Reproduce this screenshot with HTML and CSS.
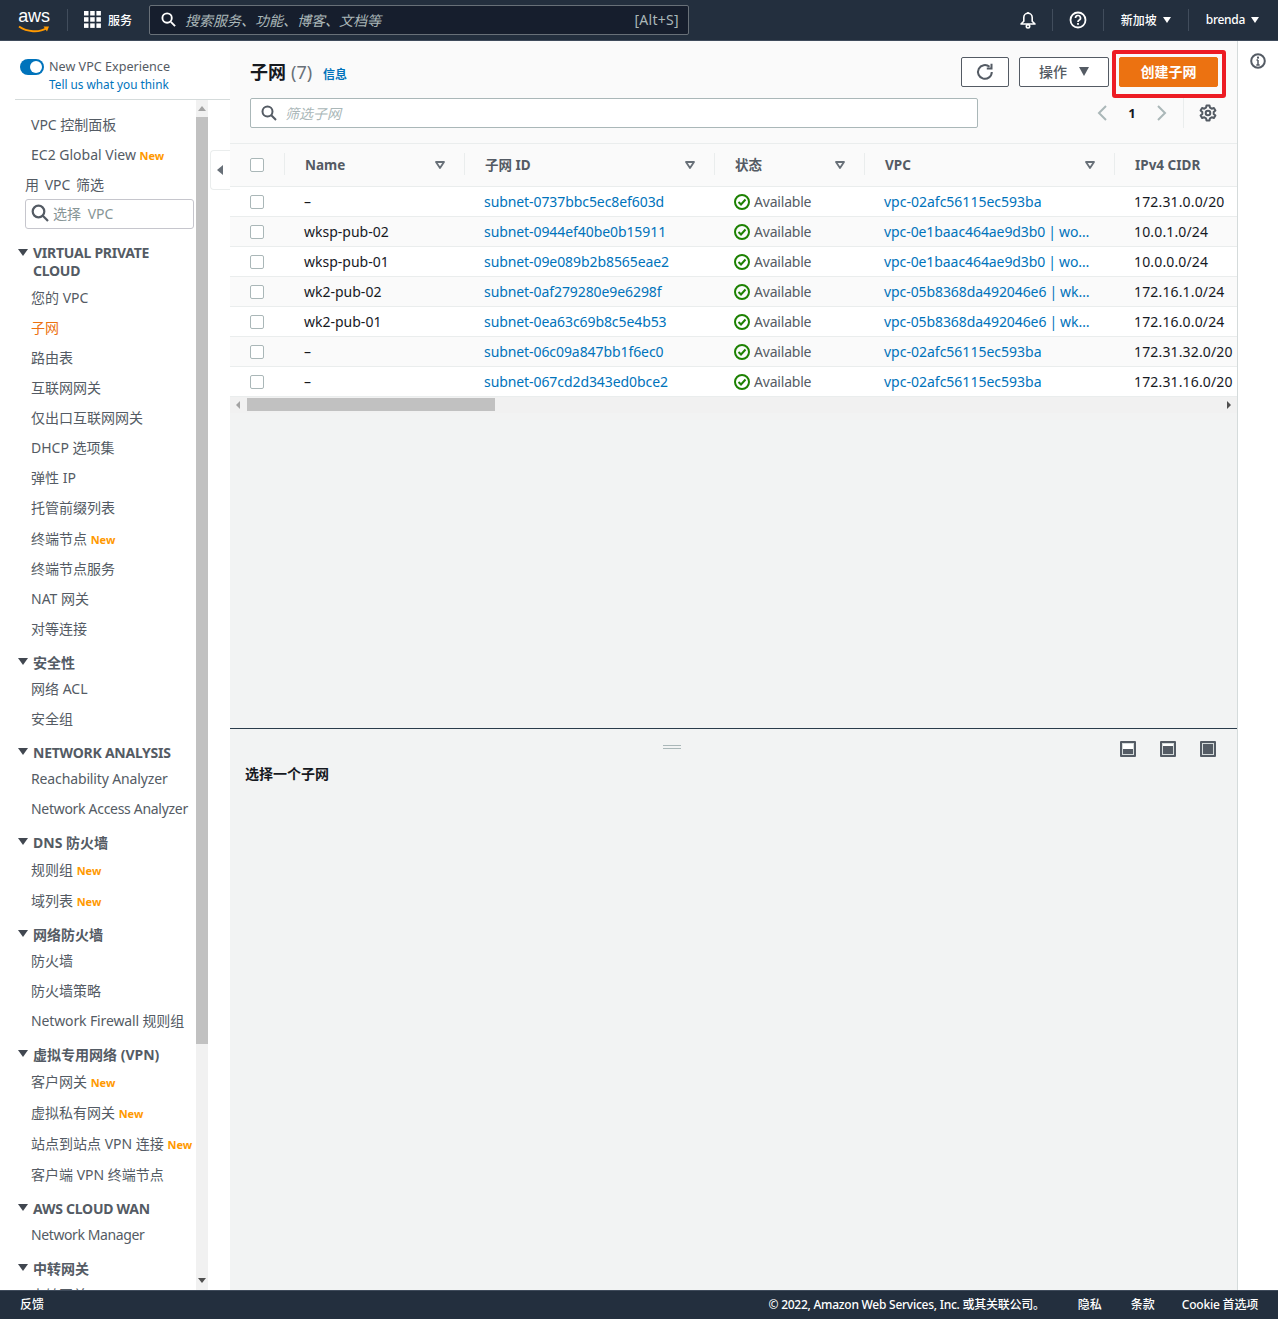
FILE: index.html
```html
<!DOCTYPE html>
<html lang="zh">
<head>
<meta charset="utf-8">
<title>子网 | VPC Console</title>
<link rel="stylesheet" href="styles.css">
</head>
<body>
<header class="topbar">
  <div class="logo">
    <span class="logo-text">aws</span>
    <svg class="logo-smile" width="32" height="8" viewBox="0 0 32 8"><path d="M1 1.500C9 7 21 8 29 3" fill="none" stroke="#f90" stroke-width="2"/><path d="M25.500 1.500L31 1.500L29 6.500Z" fill="#f90"/></svg>
  </div>
  <span class="top-sep top-sep-a"></span>
  <svg class="grid-icon" width="17" height="17" viewBox="0 0 17 17" fill="#fff"><rect width="4.500" height="4.500"/><rect x="6.200" width="4.500" height="4.500"/><rect x="12.400" width="4.500" height="4.500"/><rect y="6.200" width="4.500" height="4.500"/><rect x="6.200" y="6.200" width="4.500" height="4.500"/><rect x="12.400" y="6.200" width="4.500" height="4.500"/><rect y="12.400" width="4.500" height="4.500"/><rect x="6.200" y="12.400" width="4.500" height="4.500"/><rect x="12.400" y="12.400" width="4.500" height="4.500"/></svg>
  <span class="top-link services">服务</span>
  <div class="top-search">
    <svg width="15" height="15" viewBox="0 0 16 16" fill="none" stroke="#fff" stroke-width="2"><circle cx="6.500" cy="6.500" r="5"/><path d="M10.500 10.500L15 15"/></svg>
    <span class="top-search-text">搜索服务、功能、博客、文档等</span>
    <span class="top-search-key">[Alt+S]</span>
  </div>
  <div class="top-right">
    <svg class="bell" width="18" height="18" viewBox="0 0 18 18" fill="none" stroke="#fff" stroke-width="1.600"><path d="M2 13L4.800 10.200V6.500a4.200 4.200 0 0 1 8.400 0v3.700L16 13Z" stroke-linejoin="round"/><circle cx="9" cy="15.300" r="1.700"/><path d="M9 1V2.300"/></svg>
    <span class="top-sep"></span>
    <svg class="help" width="18" height="18" viewBox="0 0 18 18" fill="none" stroke="#fff"><circle cx="9" cy="9" r="7.500" stroke-width="1.800"/><path d="M6.500 7a2.500 2.500 0 1 1 3.500 2.300C9.300 9.700 9 10 9 11" stroke-width="1.700"/><rect x="8.100" y="12" width="1.800" height="1.800" fill="#fff" stroke="none"/></svg>
    <span class="top-sep"></span>
    <span class="top-link region">新加坡<i class="caret"></i></span>
    <span class="top-sep"></span>
    <span class="top-link user"><span class="user-name">brenda</span><i class="caret"></i></span>
  </div>
</header>

<div class="shell">
  <aside class="sidebar">
    <div class="experience">
      <span class="toggle"></span>
      <div class="experience-text">
        <div class="experience-title">New VPC Experience</div>
        <a class="experience-link">Tell us what you think</a>
      </div>
    </div>
    <div class="nav-wrap">
      <nav class="nav">
        <a class="nav-item first">VPC 控制面板</a>
        <a class="nav-item">EC2 Global View <b class="new">New</b></a>
        <div class="filter-label">用 VPC 筛选</div>
        <div class="vpc-select">
          <svg width="18" height="18" viewBox="0 0 18 18" fill="none" stroke="#545b64" stroke-width="2.200"><circle cx="7.500" cy="7.500" r="5.800"/><path d="M11.800 11.800L17 17"/></svg>
          <span>选择 VPC</span>
        </div>

        <div class="nav-head tall en-head">VIRTUAL PRIVATE CLOUD</div>
        <a class="nav-item">您的 VPC</a>
        <a class="nav-item active">子网</a>
        <a class="nav-item">路由表</a>
        <a class="nav-item">互联网网关</a>
        <a class="nav-item">仅出口互联网网关</a>
        <a class="nav-item">DHCP 选项集</a>
        <a class="nav-item">弹性 IP</a>
        <a class="nav-item">托管前缀列表</a>
        <a class="nav-item has-new">终端节点 <b class="new">New</b></a>
        <a class="nav-item">终端节点服务</a>
        <a class="nav-item">NAT 网关</a>
        <a class="nav-item">对等连接</a>

        <div class="nav-head">安全性</div>
        <a class="nav-item">网络 ACL</a>
        <a class="nav-item">安全组</a>

        <div class="nav-head en-head">NETWORK ANALYSIS</div>
        <a class="nav-item en">Reachability Analyzer</a>
        <a class="nav-item en-tight">Network Access Analyzer</a>

        <div class="nav-head">DNS 防火墙</div>
        <a class="nav-item has-new">规则组 <b class="new">New</b></a>
        <a class="nav-item has-new">域列表 <b class="new">New</b></a>

        <div class="nav-head">网络防火墙</div>
        <a class="nav-item">防火墙</a>
        <a class="nav-item">防火墙策略</a>
        <a class="nav-item en">Network Firewall 规则组</a>

        <div class="nav-head">虚拟专用网络 (VPN)</div>
        <a class="nav-item has-new">客户网关 <b class="new">New</b></a>
        <a class="nav-item has-new">虚拟私有网关 <b class="new">New</b></a>
        <a class="nav-item has-new">站点到站点 VPN 连接 <b class="new">New</b></a>
        <a class="nav-item nudge">客户端 VPN 终端节点</a>

        <div class="nav-head en-head">AWS CLOUD WAN</div>
        <a class="nav-item en-tighter">Network Manager</a>

        <div class="nav-head">中转网关</div>
        <a class="nav-item">中转网关</a>
      </nav>
      <div class="scrollbar">
        <i class="arrow-up"></i>
        <div class="thumb"></div>
        <i class="arrow-down"></i>
      </div>
    </div>
  </aside>

  <main class="content">
    <button class="collapse" aria-label="collapse"><i></i></button>
    <section class="list-head">
      <div class="title-row">
        <h1>子网 <span class="count">(7)</span> <a class="info">信息</a></h1>
        <div class="actions">
          <button class="btn icon-btn"><svg width="18" height="18" viewBox="0 0 18 18" fill="none" stroke="#545b64" stroke-width="2"><path d="M15.800 9A6.900 6.900 0 1 1 13.500 3.800"/><path d="M15.500 0.800V5.500H10.800" stroke-width="2"/></svg></button>
          <button class="btn menu-btn">操作<i class="btn-caret"></i></button>
          <button class="btn primary">创建子网</button>
        </div>
      </div>
      <div class="filter-row">
        <div class="filter">
          <svg width="16" height="16" viewBox="0 0 16 16" fill="none" stroke="#545b64" stroke-width="2"><circle cx="6.500" cy="6.500" r="5"/><path d="M10.300 10.300L15 15"/></svg>
          <span>筛选子网</span>
        </div>
        <div class="pager">
          <svg width="12" height="16" viewBox="0 0 12 16" fill="none" stroke="#aab7b8" stroke-width="2"><path d="M10 1L3 8L10 15"/></svg>
          <span class="page-num">1</span>
          <svg width="12" height="16" viewBox="0 0 12 16" fill="none" stroke="#aab7b8" stroke-width="2"><path d="M2 1L9 8L2 15"/></svg>
          <span class="pager-sep"></span>
          <svg class="gear" width="18" height="18" viewBox="0 0 18 18" fill="none" stroke="#545b64" stroke-width="2"><circle cx="9" cy="9" r="2.300"/><path d="M7.500 1.500h3l.5 2.200 1.700 1 2.200-.7 1.500 2.600-1.700 1.500v1.800l1.700 1.500-1.500 2.600-2.200-.7-1.700 1-.5 2.200h-3l-.5-2.200-1.700-1-2.200.7-1.500-2.600 1.700-1.500V8.100L1.600 6.600 3.100 4l2.200.7 1.700-1Z" stroke-linejoin="round"/></svg>
        </div>
      </div>
    </section>

    <div class="table-wrap">
      <table class="grid">
        <colgroup><col class="c0"><col class="c1"><col class="c2"><col class="c3"><col class="c4"><col class="c5"></colgroup>
        <thead>
          <tr>
            <th><span class="check"></span></th>
            <th><div class="th-in">Name<svg class="sort" width="10" height="8" viewBox="0 0 10 8"><path d="M1 1H9L5 7Z" fill="#fafafa" stroke="#687078" stroke-width="1.800" stroke-linejoin="round"/></svg></div></th>
            <th><div class="th-in">子网 ID<svg class="sort" width="10" height="8" viewBox="0 0 10 8"><path d="M1 1H9L5 7Z" fill="#fafafa" stroke="#687078" stroke-width="1.800" stroke-linejoin="round"/></svg></div></th>
            <th><div class="th-in">状态<svg class="sort" width="10" height="8" viewBox="0 0 10 8"><path d="M1 1H9L5 7Z" fill="#fafafa" stroke="#687078" stroke-width="1.800" stroke-linejoin="round"/></svg></div></th>
            <th><div class="th-in">VPC<svg class="sort" width="10" height="8" viewBox="0 0 10 8"><path d="M1 1H9L5 7Z" fill="#fafafa" stroke="#687078" stroke-width="1.800" stroke-linejoin="round"/></svg></div></th>
            <th><div class="th-in">IPv4 CIDR</div></th>
          </tr>
        </thead>
        <tbody>
          <tr><td><span class="check"></span></td><td>–</td><td class="id"><a>subnet-0737bbc5ec8ef603d</a></td><td><span class="status"><svg width="16" height="16" viewBox="0 0 16 16" fill="none" stroke="#1d8102" stroke-width="2"><circle cx="8" cy="8" r="7"/><path d="M4.500 8L7 10.500L11.500 5.500"/></svg>Available</span></td><td><a>vpc-02afc56115ec593ba</a></td><td class="cidr">172.31.0.0/20</td></tr>
          <tr><td><span class="check"></span></td><td>wksp-pub-02</td><td class="id"><a>subnet-0944ef40be0b15911</a></td><td><span class="status"><svg width="16" height="16" viewBox="0 0 16 16" fill="none" stroke="#1d8102" stroke-width="2"><circle cx="8" cy="8" r="7"/><path d="M4.500 8L7 10.500L11.500 5.500"/></svg>Available</span></td><td class="vpc-long"><a>vpc-0e1baac464ae9d3b0 | wo…</a></td><td class="cidr">10.0.1.0/24</td></tr>
          <tr><td><span class="check"></span></td><td>wksp-pub-01</td><td class="id"><a>subnet-09e089b2b8565eae2</a></td><td><span class="status"><svg width="16" height="16" viewBox="0 0 16 16" fill="none" stroke="#1d8102" stroke-width="2"><circle cx="8" cy="8" r="7"/><path d="M4.500 8L7 10.500L11.500 5.500"/></svg>Available</span></td><td class="vpc-long"><a>vpc-0e1baac464ae9d3b0 | wo…</a></td><td class="cidr">10.0.0.0/24</td></tr>
          <tr><td><span class="check"></span></td><td>wk2-pub-02</td><td class="id"><a>subnet-0af279280e9e6298f</a></td><td><span class="status"><svg width="16" height="16" viewBox="0 0 16 16" fill="none" stroke="#1d8102" stroke-width="2"><circle cx="8" cy="8" r="7"/><path d="M4.500 8L7 10.500L11.500 5.500"/></svg>Available</span></td><td class="vpc-long"><a>vpc-05b8368da492046e6 | wk…</a></td><td class="cidr">172.16.1.0/24</td></tr>
          <tr><td><span class="check"></span></td><td>wk2-pub-01</td><td class="id"><a>subnet-0ea63c69b8c5e4b53</a></td><td><span class="status"><svg width="16" height="16" viewBox="0 0 16 16" fill="none" stroke="#1d8102" stroke-width="2"><circle cx="8" cy="8" r="7"/><path d="M4.500 8L7 10.500L11.500 5.500"/></svg>Available</span></td><td class="vpc-long"><a>vpc-05b8368da492046e6 | wk…</a></td><td class="cidr">172.16.0.0/24</td></tr>
          <tr><td><span class="check"></span></td><td>–</td><td class="id"><a>subnet-06c09a847bb1f6ec0</a></td><td><span class="status"><svg width="16" height="16" viewBox="0 0 16 16" fill="none" stroke="#1d8102" stroke-width="2"><circle cx="8" cy="8" r="7"/><path d="M4.500 8L7 10.500L11.500 5.500"/></svg>Available</span></td><td><a>vpc-02afc56115ec593ba</a></td><td class="cidr">172.31.32.0/20</td></tr>
          <tr><td><span class="check"></span></td><td>–</td><td class="id"><a>subnet-067cd2d343ed0bce2</a></td><td><span class="status"><svg width="16" height="16" viewBox="0 0 16 16" fill="none" stroke="#1d8102" stroke-width="2"><circle cx="8" cy="8" r="7"/><path d="M4.500 8L7 10.500L11.500 5.500"/></svg>Available</span></td><td><a>vpc-02afc56115ec593ba</a></td><td class="cidr">172.31.16.0/20</td></tr>
        </tbody>
      </table>
    </div>
    <div class="hscroll">
      <i class="arrow-left"></i>
      <div class="hthumb"></div>
      <i class="arrow-right"></i>
    </div>
    <div class="empty"></div>

    <section class="split">
      <div class="split-top">
        <span class="grip"></span>
        <div class="split-icons">
          <span class="pane-icon low"></span>
          <span class="pane-icon mid"></span>
          <span class="pane-icon full"></span>
        </div>
      </div>
      <div class="split-title">选择一个子网</div>
    </section>
  </main>

  <aside class="rail">
    <svg width="16" height="16" viewBox="0 0 16 16" fill="none" stroke="#545b64" stroke-width="2"><circle cx="8" cy="8" r="6.800"/><path d="M8 7V12M6.300 12H9.700M6.500 7H8" stroke-width="1.500"/><rect x="7" y="3.600" width="2" height="2" fill="#545b64" stroke="none"/></svg>
  </aside>
</div>

<footer class="footer">
  <span class="feedback">反馈</span>
  <div class="foot-right">
    <span class="copy">© 2022, Amazon Web Services, Inc. 或其关联公司。</span>
    <span class="privacy">隐私</span>
    <span>条款</span>
    <span class="cookie">Cookie 首选项</span>
  </div>
</footer>
</body>
</html>
```

FILE: styles.css
```css
*, *::before, *::after { box-sizing: border-box; }
html, body { height: 100%; }
body {
  margin: 0;
  height: 1319px;
  overflow: hidden;
  display: flex;
  flex-direction: column;
  font-family: "Noto Sans", "Noto Sans CJK SC", sans-serif;
  font-size: 14px;
  color: #16191f;
  background: #f2f3f3;
}
i { display: block; font-style: normal; }
a { color: #0073bb; text-decoration: none; }

/* top bar */
.topbar {
  flex: 0 0 41px;
  display: flex;
  align-items: center;
  background: #232f3e;
  border-bottom: 1px solid #3f4b5b;
  padding: 0 19px 1px 18px;
  color: #fff;
}
.logo { width: 32px; height: 32px; display: flex; flex-direction: column; align-items: center; }
.logo-text { font-size: 18px; line-height: 21px; margin-top: 2px; font-family: "Liberation Sans", sans-serif; letter-spacing: -0.2px; }
.logo-smile { margin-top: -2px; }
.top-sep { width: 1px; height: 22px; background: #414d5c; }
.top-sep-a { margin-left: 17px; margin-right: 16px; }
.top-link { font-size: 12px; font-weight: 500; white-space: nowrap; display: flex; align-items: center; }
.services { margin-left: 7px; margin-right: 17px; }
.top-search {
  width: 540px;
  height: 30px;
  display: flex;
  align-items: center;
  gap: 9px;
  padding: 0 9px 0 11px;
  background: #161e2d;
  border: 1px solid #687078;
  border-radius: 2px;
  font-size: 14px;
}
.top-search-text { flex: 1; font-style: italic; color: #aab7b8; }
.top-search-key { color: #aab7b8; letter-spacing: 0.300px; }
.top-right { margin-left: auto; display: flex; align-items: center; }
.bell { margin-right: 15px; }
.help { margin: 0 16px 0 16px; }
.region { margin: 0 17px 0 17px; }
.user { margin-left: 17px; }
.user-name { letter-spacing: -0.3px; }
.caret { width: 0; height: 0; margin-left: 6px; border-left: 4.500px solid transparent; border-right: 4.500px solid transparent; border-top: 6px solid #fff; }

/* shell */
.shell { flex: 1; min-height: 0; display: flex; }
.sidebar { flex: 0 0 230px; background: #fff; display: flex; flex-direction: column; min-height: 0; }
.experience {
  flex: 0 0 59px;
  margin-left: 15px;
  padding: 18px 0 0 5px;
  display: flex;
  gap: 5px;
  border-bottom: 1px solid #d5dbdb;
}
.toggle { width: 24px; height: 16px; border-radius: 8px; background: #0073bb; position: relative; flex: none; }
.toggle::after { content: ""; position: absolute; right: 2px; top: 2px; width: 12px; height: 12px; border-radius: 50%; background: #fff; }
.experience-title { font-size: 12.600px; line-height: 15px; color: #545b64; white-space: nowrap; }
.experience-link { display: block; margin-top: 2px; font-size: 11.800px; line-height: 16px; color: #0073bb; }

.nav-wrap { flex: 1; min-height: 0; display: flex; overflow: hidden; }
.nav { width: 196px; flex: none; overflow: hidden; color: #545b64; padding-top: 10px; }
.nav-item { display: block; height: 30px; line-height: 30px; padding-left: 31px; color: #545b64; white-space: nowrap; font-size: 14px; }
.nav-item.has-new { height: 31px; line-height: 31px; }
.nav-item.nudge { margin-top: 1px; }
.nav-item.active { color: #ec7211; }
.nav-item.en { letter-spacing: -0.130px; }
.nav-item.en-tight { letter-spacing: -0.300px; }
.nav-item.en-tighter { letter-spacing: -0.400px; }
.new { color: #ff9900; font-size: 11px; font-weight: 700; }
.filter-label { height: 29px; line-height: 30px; padding-left: 25px; word-spacing: 2px; }
.vpc-select {
  margin-left: 25px;
  width: 169px;
  height: 30px;
  display: flex;
  align-items: center;
  gap: 4px;
  padding: 0 0 2px 5px;
  border: 1px solid #c6c6cd;
  border-radius: 3px;
  color: #879596;
  word-spacing: 3px;
}
.nav-head {
  position: relative;
  font-weight: 700;
  font-size: 14px;
  line-height: 18px;
  color: #545b64;
  padding: 10px 20px 0 33px;
  height: 30px;
}
.en-head { letter-spacing: -0.250px; }
.nav-head.tall { height: 39px; margin-top: 15px; padding-top: 0; }
.nav-head::before {
  content: "";
  position: absolute;
  left: 18px;
  top: 14px;
  border-left: 5px solid transparent;
  border-right: 5px solid transparent;
  border-top: 7px solid #414750;
}
.nav-head.tall::before { top: 5px; }
.scrollbar { width: 12px; flex: none; background: #f1f1f1; display: flex; flex-direction: column; align-items: center; position: relative; padding-top: 17px; }
.thumb { width: 12px; height: 927px; background: #c1c1c1; }
.arrow-up { position: absolute; top: 6px; border-left: 4px solid transparent; border-right: 4px solid transparent; border-bottom: 5px solid #a3a3a3; }
.arrow-down { position: absolute; bottom: 7px; border-left: 4px solid transparent; border-right: 4px solid transparent; border-top: 5px solid #505050; }

/* content */
.content { width: 1008px; flex: none; display: flex; flex-direction: column; position: relative; border-right: 1px solid #d5dbdb; background: #f2f3f3; }
.collapse { position: absolute; left: -20px; top: 109px; width: 20px; height: 40px; background: #fff; border: 1px solid #eaeded; border-right: 0; border-radius: 4px 0 0 4px; padding: 0; z-index: 2; }
.collapse i { margin-left: 6px; border-top: 5px solid transparent; border-bottom: 5px solid transparent; border-right: 6px solid #687078; width: 0; }
.list-head { height: 103px; background: #fafafa; padding: 16px 19px 0 20px; border-bottom: 1px solid #eaeded; }
.title-row { display: flex; justify-content: space-between; height: 30px; align-items: center; }
h1 { margin: -3px 0 0; font-size: 18px; font-weight: 700; display: flex; align-items: baseline; gap: 5px; color: #16191f; }
.count { font-weight: 400; color: #687078; }
.info { font-size: 12px; font-weight: 700; margin-left: 6px; }
.actions { display: flex; gap: 10px; position: relative; }
.actions::after { content: ""; position: absolute; right: -8px; top: -7px; width: 114px; height: 48px; border: 4px solid #ed1c24; border-radius: 3px; pointer-events: none; }
.btn { height: 30px; border: 1px solid #545b64; border-radius: 2px; background: #fff; color: #545b64; font: 700 14px/26px "Noto Sans", "Noto Sans CJK SC", sans-serif; padding: 0 0 1px; display: flex; align-items: center; justify-content: center; }
.icon-btn { width: 48px; }
.menu-btn { width: 90px; gap: 12px; font-weight: 500; }
.btn-caret { border-left: 5.500px solid transparent; border-right: 5.500px solid transparent; border-top: 9px solid #545b64; }
.primary { width: 99px; background: #ec7211; border-color: #ec7211; color: #fff; }
.filter-row { display: flex; margin-top: 11px; align-items: center; }
.filter { width: 728px; height: 30px; display: flex; align-items: center; gap: 8px; padding: 0 0 1px 10px; background: #fff; border: 1px solid #aab7b8; border-radius: 2px; color: #aab7b8; font-style: italic; font-size: 14px; }
.pager { margin-left: auto; display: flex; align-items: center; height: 30px; padding-right: 1px; }
.page-num { width: 48px; text-align: center; font-weight: 700; font-size: 13px; }
.pager-sep { width: 1px; height: 30px; background: #eaeded; margin: 0 15px 0 15px; }

.table-wrap { overflow: hidden; background: #fff; }
.grid { border-collapse: collapse; table-layout: fixed; width: 1020px; }
.c0 { width: 55px; } .c1 { width: 180px; } .c2 { width: 250px; } .c3 { width: 150px; } .c4 { width: 250px; } .c5 { width: 135px; }
th { height: 42px; padding: 0 0 0 20px; background: #fafafa; text-align: left; font-size: 13.500px; line-height: 18px; font-weight: 700; color: #545b64; border-bottom: 1px solid #eaeded; }
th:first-child, td:first-child { padding-left: 20px; }
.th-in { display: flex; align-items: center; justify-content: space-between; height: 24px; padding-right: 20px; white-space: nowrap; position: relative; }
th + th .th-in::before { content: ""; position: absolute; left: -21px; top: 0; width: 1px; height: 22px; background: #eaeded; }
.sort { flex: none; }
td { height: 30px; padding: 1px 0 0 19px; border-bottom: 1px solid #eaeded; white-space: nowrap; overflow: hidden; color: #16191f; }
tbody tr:nth-child(even) td { background: #fafafa; }
.id { letter-spacing: -0.080px; }
.cidr { letter-spacing: 0.150px; }
.vpc-long { letter-spacing: -0.080px; word-spacing: -0.500px; }
.check { display: block; width: 14px; height: 14px; background: #fff; border: 1px solid #aab7b8; border-radius: 2px; }
.status { display: flex; align-items: center; gap: 4px; height: 16px; line-height: 16px; color: #545b64; letter-spacing: -0.200px; }
.hscroll { height: 16px; background: #f1f1f1; display: flex; align-items: center; padding-left: 17px; position: relative; }
.hthumb { width: 248px; height: 13px; background: #c1c1c1; }
.arrow-left { position: absolute; left: 6px; border-top: 4px solid transparent; border-bottom: 4px solid transparent; border-right: 4px solid #a3a3a3; }
.arrow-right { position: absolute; right: 6px; border-top: 4px solid transparent; border-bottom: 4px solid transparent; border-left: 4px solid #505050; }
.empty { flex: 0 0 315px; }
.split { flex: 1; border-top: 1px solid #2a3b4b; padding: 0 0 0 15px; }
.split-top { height: 34px; position: relative; }
.grip { position: absolute; left: 418px; top: 16px; width: 18px; height: 4px; border-top: 1px solid #aab7b8; border-bottom: 1px solid #aab7b8; }
.split-icons { display: flex; gap: 24px; justify-content: flex-end; padding: 12px 21px 0 0; }
.pane-icon { width: 16px; height: 16px; border: 2px solid #545b64; background: #fff; border-radius: 1px; position: relative; box-shadow: inset 0 0 0 1px #d5dbdb; }
.pane-icon::after { content: ""; position: absolute; left: 1px; right: 1px; bottom: 1px; background: #545b64; }
.low::after { height: 5px; }
.mid::after { height: 8px; }
.full::after { height: 10px; }
.split-title { font-size: 14px; font-weight: 700; color: #16191f; line-height: 20px; margin-top: 1px; }

.rail { flex: 1; background: #fff; display: flex; justify-content: center; padding-top: 12px; }

/* footer */
.footer { flex: 0 0 29px; background: #232f3e; border-top: 1px solid #3f4b5b; color: #fff; display: flex; align-items: center; justify-content: space-between; padding: 0 20px 2px; font-size: 12px; font-weight: 500; }
.foot-right { display: flex; gap: 27px; }
.copy { margin-right: 6px; letter-spacing: -0.250px; }
.privacy { margin-right: 2px; }
.cookie { letter-spacing: -0.200px; }
```
